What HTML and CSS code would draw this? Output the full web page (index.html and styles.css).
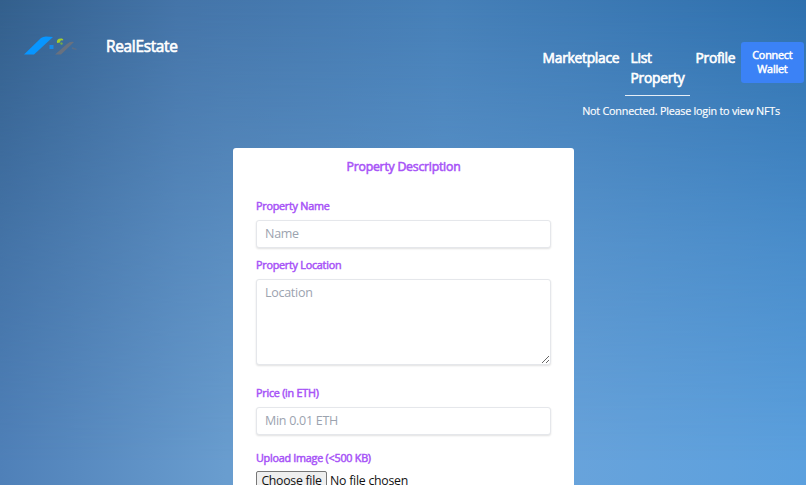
FILE: index.html
```html
<!DOCTYPE html>
<html lang="en">
<head>
<meta charset="utf-8">
<title>RealEstate</title>
<link rel="stylesheet" href="styles.css">
</head>
<body>
<header class="header">
  <a class="brand">
    <svg class="logo" viewBox="0 0 54 22" width="54" height="22" aria-hidden="true">
      <path fill="#0896ff" d="M0 18.500 17 2Q19 .5 22 .5L29 1 10 18.500z"/>
      <path fill="#168be8" d="M25.500 9h4v4h-4z"/>
      <path fill="#68717f" d="m31 18.500 12-10.500q3-3 7-2L37 18.500z"/>
      <path fill="#596e88" d="m48 11 5 2-1 1-4-1z"/>
      <path fill="#a3cc2d" d="M33 7q-1-5 5-4.500 2 1 1 2-3-1-3 2z"/>
      <path fill="#72a94b" d="M36 7q2-2 3 1l-2 1z"/>
    </svg>
    <span class="brand-name">RealEstate</span>
  </a>
  <div class="menu">
    <nav class="nav">
      <a class="nav-link">Marketplace</a>
      <a class="nav-link active">List<br>Property</a>
      <a class="nav-link">Profile</a>
      <button class="connect">Connect<br>Wallet</button>
    </nav>
    <p class="status">Not Connected. Please login to view NFTs</p>
  </div>
</header>
<main class="card">
  <h1 class="title">Property Description</h1>
  <form>
    <label class="label name-label" for="name">Property Name</label>
    <input class="field" id="name" placeholder="Name">
    <label class="label location-label" for="location">Property Location</label>
    <textarea class="field area" id="location" placeholder="Location"></textarea>
    <label class="label price-label" for="price">Price (in ETH)</label>
    <input class="field" id="price" placeholder="Min 0.01 ETH">
    <label class="label upload-label">Upload Image (&lt;500 KB)</label>
    <div class="file"><button class="file-button" type="button">Choose file</button><span>No file chosen</span></div>
  </form>
</main>
</body>
</html>
```
FILE: styles.css
```css
* { box-sizing: border-box; }
body {
  margin: 0;
  height: 485px;
  overflow: hidden;
  font-family: "Open Sans", sans-serif;
  color: #fff;
  background: linear-gradient(90deg, #4f80b8, #699dcf 28%, #68a3db 70%, #5ba0de);
}
body::before {
  content: "";
  position: absolute;
  z-index: -1;
  inset: 0;
  background: linear-gradient(90deg, #335f8c, #4474a8 22%, #467fb7 55%, #2e70ae);
  -webkit-mask-image: linear-gradient(#000, rgba(0, 0, 0, .4) 50%, transparent 95%);
  mask-image: linear-gradient(#000, rgba(0, 0, 0, .4) 50%, transparent 95%);
}
.header { display: flex; justify-content: space-between; height: 148px; padding: 36px 0 0 24px; }
.brand { display: flex; align-items: flex-start; }
.logo { display: block; }
.brand-name { margin-left: 28px; font-size: 15.400px; letter-spacing: -.3px; line-height: 22px; -webkit-text-stroke: .65px; }
.menu { width: 269px; }
.nav { display: flex; align-items: flex-start; padding-top: 6px; }
.nav-link { flex: none; padding: 6px 5.600px 7px; font-size: 13.800px; letter-spacing: -.26px; line-height: 20px; -webkit-text-stroke: .65px; white-space: nowrap; }
.nav-link.active { border-bottom: 1px solid #e5edf6; }
.connect { flex: none; width: 63px; height: 41px; padding: 0 0 1px; border: 0; border-radius: 3px; background: #3b82f6; color: #fff; font-family: inherit; font-size: 10.800px; letter-spacing: -.2px; line-height: 14.500px; -webkit-text-stroke: .5px; }
.status { margin: 7px 26px 0 0; text-align: right; font-size: 10.800px; letter-spacing: -.23px; line-height: 16px; white-space: nowrap; -webkit-text-stroke: .15px; }
.card { width: 341px; height: 337px; margin-left: 233px; padding: 9px 23px 0; overflow: hidden; border-radius: 3px 3px 0 0; background: #fff; }
.title { margin: 0 0 29px; text-align: center; color: #a855f7; font-size: 12.300px; letter-spacing: -.24px; line-height: 20px; font-weight: 400; -webkit-text-stroke: .55px; }
.label { display: block; color: #a855f7; font-size: 10.800px; letter-spacing: -.25px; line-height: 14px; height: 14px; -webkit-text-stroke: .5px; }
.name-label { margin-top: -7px; }
.location-label { margin-top: 10px; }
.price-label { margin-top: 21px; }
.upload-label { margin-top: 16px; }
.field { display: block; width: 295px; height: 28px; margin: 7px 0 0; padding: 3px 8px 5px; border: 1px solid #e5e7eb; border-radius: 3px; outline: 0; background: #fff; box-shadow: 0 1px 2px rgba(0, 0, 0, .12); color: #374151; font-family: inherit; font-size: 12.500px; letter-spacing: -.28px; line-height: 18px; }
.field::placeholder { color: #9ca3af; opacity: 1; }
.area { height: 86px; padding-top: 4px; resize: both; }
.file { display: flex; gap: 3px; width: 295px; margin-top: 6px; color: #111; font-size: 12.300px; letter-spacing: -.24px; line-height: 20px; }
.file-button { flex: none; width: 71px; height: 20px; padding: 0; border: 1px solid #777; border-radius: 2px; background: #efefef; color: #111; font-family: inherit; font-size: 12.300px; letter-spacing: -.28px; line-height: 18px; white-space: nowrap; }
```
